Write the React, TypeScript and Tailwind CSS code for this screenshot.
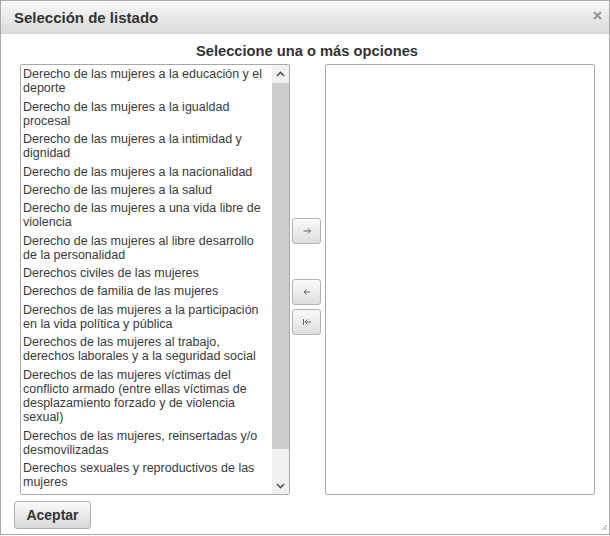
import React from "react";

const items: string[] = [
  "Derecho de las mujeres a la educación y el deporte",
  "Derecho de las mujeres a la igualdad procesal",
  "Derecho de las mujeres a la intimidad y dignidad",
  "Derecho de las mujeres a la nacionalidad",
  "Derecho de las mujeres a la salud",
  "Derecho de las mujeres a una vida libre de violencia",
  "Derecho de las mujeres al libre desarrollo de la personalidad",
  "Derechos civiles de las mujeres",
  "Derechos de familia de las mujeres",
  "Derechos de las mujeres a la participación en la vida política y pública",
  "Derechos de las mujeres al trabajo, derechos laborales y a la seguridad social",
  "Derechos de las mujeres víctimas del conflicto armado (entre ellas víctimas de desplazamiento forzado y de violencia sexual)",
  "Derechos de las mujeres, reinsertadas y/o desmovilizadas",
  "Derechos sexuales y reproductivos de las mujeres",
];

function MoveButton({ kind }: { kind: "right" | "left" | "first" }) {
  return (
    <button className="w-[29px] h-[26px] rounded-[3px] border border-[#b4b4b4] bg-gradient-to-b from-[#fafafa] to-[#dedede] flex items-center justify-center">
      <svg width="10" height="8" viewBox="0 0 10 8" fill="none" stroke="#666" strokeWidth="1">
        {kind === "right" && (
          <>
            <path d="M1.5 4H8.5" />
            <path d="M6 1.5L8.5 4L6 6.5" />
          </>
        )}
        {kind === "left" && (
          <>
            <path d="M2.5 4H8" />
            <path d="M4.5 1.5L2 4L4.5 6.5" />
          </>
        )}
        {kind === "first" && (
          <>
            <path d="M1.5 1V7" />
            <path d="M3.5 4H9" />
            <path d="M5.5 1.5L3 4L5.5 6.5" />
          </>
        )}
      </svg>
    </button>
  );
}

export default function App() {
  return (
    <div
      className="relative w-[610px] h-[536px] bg-white text-[#333]"
      style={{ fontFamily: '"Liberation Sans", Arial, sans-serif' }}
    >
      <div className="w-[610px] h-[535px] border border-[#a8a8a8] flex flex-col">
        <div className="h-[33px] shrink-0 bg-gradient-to-b from-[#f9f9f9] to-[#d9d9d9] flex items-center pl-[13px] relative">
          <span className="font-bold text-[15px] text-[#333] leading-none mt-[-1px]">Selección de listado</span>
          <svg className="absolute right-[7px] top-[10px]" width="9" height="9" viewBox="0 0 9 9">
            <path d="M1 1L8 8M8 1L1 8" stroke="#9a9a9a" strokeWidth="2.2" />
          </svg>
        </div>
        <div className="pt-[8px] text-center font-bold text-[14.7px] leading-[18px] text-[#333] pl-[4px]">
          Seleccione una o más opciones
        </div>
        <div className="flex pl-[19px] mt-[4px]">
          <div className="w-[270px] h-[431px] border border-[#a9a9a9] rounded-[2px] flex overflow-hidden bg-white">
            <div className="flex-1 overflow-hidden">
              {items.map((t) => (
                <div key={t} className="px-[2px] py-[2px] text-[12.5px] leading-[14.25px] text-[#3a3a3a]">
                  {t}
                </div>
              ))}
            </div>
            <div className="w-[17px] shrink-0 bg-[#f0f0f0] flex flex-col">
              <div className="h-[17px] flex items-center justify-center">
                <svg width="9" height="6" viewBox="0 0 9 6">
                  <path d="M1 5L4.5 1.5L8 5" fill="none" stroke="#505050" strokeWidth="1.6" />
                </svg>
              </div>
              <div className="mx-0 mt-[1px] h-[366px] bg-[#cdcdcd]" />
              <div className="flex-1" />
              <div className="h-[17px] flex items-center justify-center">
                <svg width="9" height="6" viewBox="0 0 9 6">
                  <path d="M1 1L4.5 4.5L8 1" fill="none" stroke="#505050" strokeWidth="1.6" />
                </svg>
              </div>
            </div>
          </div>
          <div className="w-[35px] flex flex-col pl-[2px] pt-[154px]">
            <MoveButton kind="right" />
            <div className="h-[35px]" />
            <MoveButton kind="left" />
            <div className="h-[4px]" />
            <MoveButton kind="first" />
          </div>
          <div className="w-[270px] h-[431px] border border-[#a9a9a9] rounded-[2px] bg-white" />
        </div>
        <div className="pl-[13px] mt-[6px]">
          <button className="w-[77px] h-[28px] rounded-[3px] border border-[#b0b0b0] bg-gradient-to-b from-[#fbfbfb] to-[#d8d8d8] font-bold text-[14px] text-[#333]">
            Aceptar
          </button>
        </div>
      </div>
      <svg className="absolute right-[2px] bottom-[5px]" width="7" height="7" viewBox="0 0 7 7">
        <path d="M6 1L1 6M6 3.5L3.5 6" stroke="#999" strokeWidth="1" />
      </svg>
    </div>
  );
}
